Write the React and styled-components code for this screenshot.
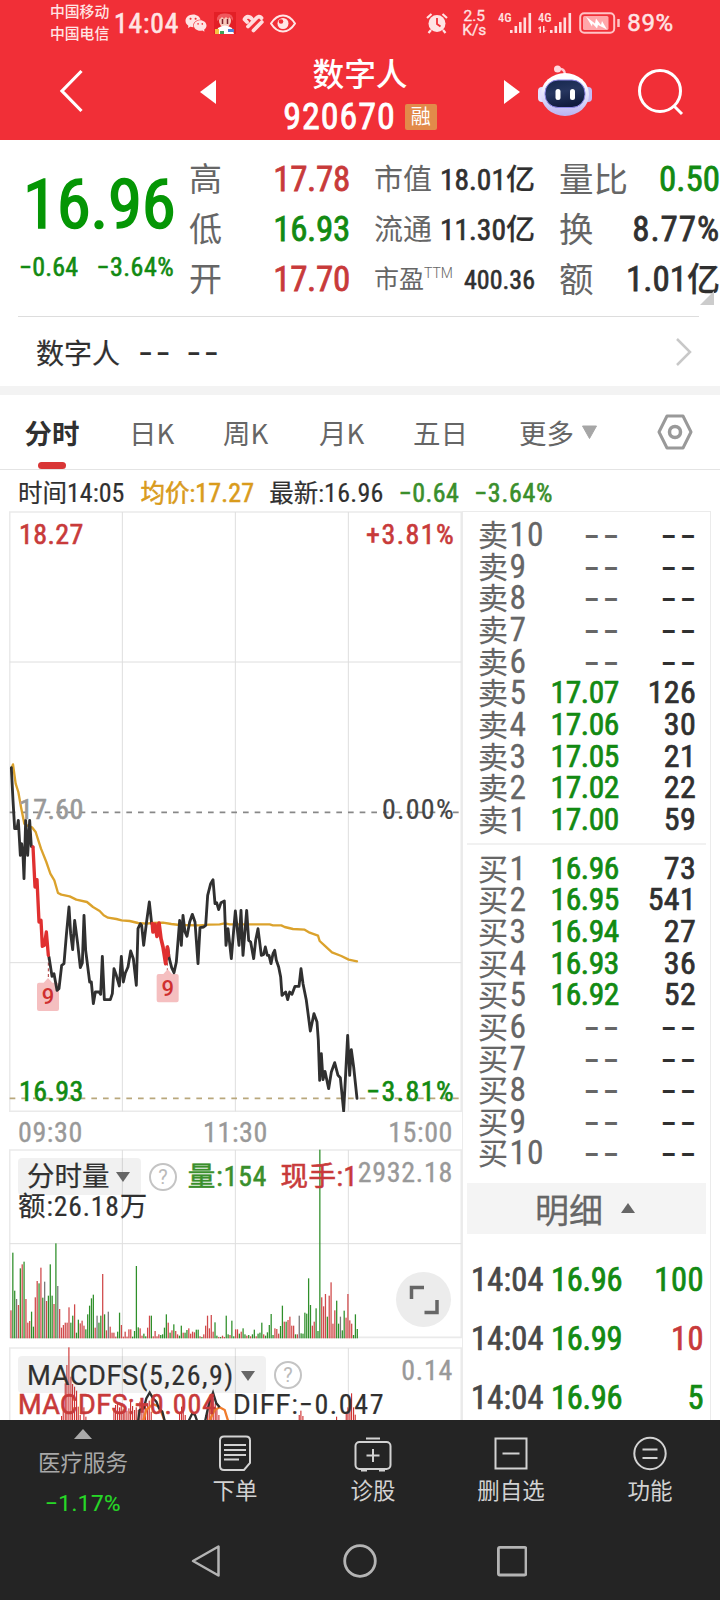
import React from 'react';
import styled, { createGlobalStyle } from 'styled-components';
import { AiFillWechat } from 'react-icons/ai';

const GlobalStyle = createGlobalStyle`
  * {
    box-sizing: border-box;
  }

  body {
    margin: 0;
    background: #fff;
    color: #303030;
    font-family: 'Roboto Condensed', 'Noto Sans CJK SC', sans-serif;
  }

  svg {
    display: block;
    flex: none;
  }
`;

const RED = '#c83a3a';
const GREEN = '#128a12';

const Screen = styled.div`
  width: 720px;
  height: 1600px;
  overflow: hidden;
  display: flex;
  flex-direction: column;
`;

// shared text piece: latin digits and chinese glyphs get their own sizes,
// $thick sits between the regular and the medium cut
const T = styled.span`
  font-size: ${props => props.$size}px;
  font-weight: ${props => props.$weight || 400};
  letter-spacing: ${props => props.$spacing || 0}px;
  color: ${props => props.$color || 'inherit'};
  margin-left: ${props => props.$ml || 0}px;
  font-family: ${props => (props.$wide ? "Roboto, 'Noto Sans CJK SC', sans-serif" : 'inherit')};
  -webkit-text-stroke: ${props => (props.$thick ? '0.022em' : '0.008em')};
  white-space: nowrap;
`;

const Pair = styled.span`
  display: flex;
  align-items: baseline;
`;

/* ---------- header ---------- */

const Header = styled.header`
  height: 140px;
  background: #f12f37;
  color: #fff;
`;

const StatusBar = styled.div`
  height: 46px;
  padding-left: 50px;
  display: flex;
  align-items: center;
  color: #ffe4e4;
`;

const Carriers = styled.div`
  width: 64px;
  font-size: 14.8px;
  line-height: 22px;
  font-weight: 500;
`;

const StatusIcons = styled.div`
  display: flex;
  align-items: center;
  margin-left: 5px;
  gap: 6px;
`;

const StatusRight = styled.div`
  display: flex;
  align-items: center;
  margin-left: 130px;
`;

const Speed = styled.div`
  width: 32px;
  margin-left: 10px;
  font: 400 15.5px/14px Roboto, sans-serif;
  -webkit-text-stroke: 0.02em;
  text-align: center;
`;

const TitleBar = styled.div`
  height: 94px;
  padding-left: 58px;
  display: grid;
  grid-template-columns: 142px 64px 192px 46px 36px 98px 60px;
  align-items: start;
`;

const Title = styled.div`
  text-align: center;
  padding-top: 10px;
`;

const Name = styled.div`
  font-size: 31.7px;
  line-height: 40px;
  font-weight: 500;
`;

const Code = styled.div`
  display: flex;
  align-items: center;
  justify-content: center;
  height: 42px;
`;

const Badge = styled.span`
  width: 32px;
  height: 26px;
  margin-left: 9px;
  border-radius: 2px;
  background: #e28a4a;
  font-size: 20px;
  line-height: 26px;
  text-align: center;
`;

const Slot = styled.div`
  padding-top: ${props => props.$top}px;
  padding-left: ${props => props.$left || 0}px;
`;

/* ---------- quote ---------- */

const Quote = styled.section`
  height: 176px;
  padding: 15px 0 0 18px;
  display: grid;
  grid-template-columns: 171px 161px 24px 161px 24px 161px;
`;

const Price = styled.div`
  display: flex;
  height: 100px;
  line-height: 100px;
  padding-left: 5px;
`;

const Change = styled.div`
  display: flex;
  line-height: 24px;
  padding-left: 1px;
  color: ${GREEN};
`;

const Stat = styled.div`
  height: 50px;
  line-height: 50px;
  display: flex;
  justify-content: space-between;
  white-space: nowrap;
`;

const Label = styled.span`
  font-size: ${props => props.$size}px;
  color: #666;
`;

const Sup = styled.sup`
  font: 300 14px/1 Roboto, sans-serif;
  position: relative;
  top: -1px;
`;

const Corner = styled.div`
  position: absolute;
  left: 700px;
  top: 291px;
  border-left: 14px solid transparent;
  border-bottom: 14px solid #ccc;
`;

const Related = styled.div`
  height: 70px;
  margin: 0 21px 0 18px;
  padding: 0 6px 0 18px;
  border-top: 1px solid #ddd;
  display: flex;
  align-items: center;
`;

const Dashes = styled.span`
  font-family: Inter, sans-serif;
  font-size: ${props => props.$size || 37}px;
  letter-spacing: 2.4px;
  color: ${props => props.$color || '#303030'};
  margin-left: ${props => props.$ml || 0}px;
  margin-right: -3px;
  white-space: nowrap;
`;

const Band = styled.div`
  height: 9px;
  background: #f3f3f3;
`;

/* ---------- tabs ---------- */

const Tabs = styled.nav`
  height: 75px;
  padding-left: 24px;
  border-bottom: 1px solid #e4e4e4;
  display: grid;
  grid-template-columns: 105px 94px 96px 94px 106px 138px 40px;
`;

const Tab = styled.div`
  display: flex;
  align-items: center;
  height: 74px;
  font: 400 27.5px/74px 'Noto Sans CJK SC', sans-serif;
  color: #666;
`;

const ActiveTab = styled.div`
  width: 56px;
  height: 74px;
  padding-top: 8px;
  display: flex;
  flex-direction: column;
  align-items: center;
  font: 700 27.5px/59px 'Noto Sans CJK SC', sans-serif;

  &::after {
    content: '';
    width: 28px;
    height: 7px;
    border-radius: 4px;
    background: #d93636;
  }
`;

const InfoLine = styled.div`
  height: 41px;
  line-height: 46px;
  padding-left: 18px;
  white-space: nowrap;
`;

/* ---------- body ---------- */

const Body = styled.main`
  height: 909px;
  display: grid;
  grid-template-columns: 453px 249px;
  padding-left: 9px;
  overflow: hidden;
`;

const Charts = styled.div`
  display: flex;
  flex-direction: column;
`;

const Panel = styled.div`
  height: ${props => props.$height}px;
  display: grid;
  grid-template-columns: 453px;

  & > * {
    grid-area: 1 / 1;
  }
`;

const Labels = styled.div`
  display: flex;
  flex-direction: column;
  padding: ${props => props.$pad};
`;

const Between = styled.div`
  display: flex;
  justify-content: space-between;
  height: 40px;
  line-height: 40px;
  margin-top: ${props => props.$mt || 0}px;
`;

const Times = styled.div`
  display: grid;
  grid-template-columns: 1fr auto 1fr;
  height: 37px;
  line-height: 41px;
  padding: 0 9px;
  font-size: 28px;
  letter-spacing: 0.6px;
  color: #999;
  -webkit-text-stroke: 0.012em;

  span:last-child {
    text-align: right;
  }
`;

const IndicatorRow = styled.div`
  display: flex;
  align-items: center;
  height: 37px;
  line-height: 37px;
  white-space: nowrap;
`;

const Chip = styled.div`
  display: flex;
  align-items: center;
  justify-content: space-between;
  width: ${props => props.$width}px;
  height: 37px;
  padding: ${props => props.$drop || 0}px 11px 0 9px;
  border-radius: 4px;
  background: rgba(120, 120, 120, 0.1);
`;

const Help = styled.div`
  width: 28px;
  height: 28px;
  margin-left: 8px;
  border: 2px solid #c4c4c4;
  border-radius: 50%;
  font: 400 20px/24px Roboto, sans-serif;
  text-align: center;
  color: #bbb;
`;

const Maximum = styled.span`
  margin-left: auto;
  margin-top: -8px;
  font-size: 28px;
  letter-spacing: 0.7px;
  color: #999;
  -webkit-text-stroke: 0.012em;
`;

const Values = styled.div`
  height: ${props => props.$height}px;
  line-height: ${props => props.$height}px;
  white-space: nowrap;
`;

const Expand = styled.div`
  width: 55px;
  height: 55px;
  margin: 53px 2px 0 auto;
  border-radius: 50%;
  background: #ececec;
  display: flex;
  align-items: center;
  justify-content: center;
`;

/* ---------- order book ---------- */

const Side = styled.aside`
  border: 1px solid #ebebeb;
  border-bottom: 0;
  padding: 7px 4px 0 4px;
`;

const Book = styled.div`
  display: grid;
  grid-template-rows: repeat(10, 31.67px);
`;

const Level = styled.div`
  display: grid;
  grid-template-columns: 70px 71px 1fr;
  padding: 0 10px 0 11px;
  line-height: 31.67px;
  text-align: right;
  white-space: nowrap;

  & > :first-child {
    text-align: left;
    color: #666;
  }
`;

const Rule = styled.div`
  height: 2px;
  margin: 7px 0 8px;
  background: #f1f1f1;
`;

const Detail = styled.div`
  height: 51px;
  margin: 14px 0 17px;
  padding-left: 68px;
  background: #f4f4f4;
  display: flex;
  align-items: center;
  gap: 18px;
  color: #666;
`;

const Trade = styled.div`
  display: grid;
  grid-template-columns: 80px 70px 1fr;
  height: 59px;
  line-height: 59px;
  padding: 0 2px 0 4px;
  font-size: 32.5px;
  -webkit-text-stroke: 0.022em;
  color: ${GREEN};

  & > :first-child {
    letter-spacing: 0.2px;
    color: #484848;
  }

  & > :nth-child(2) {
    letter-spacing: -0.3px;
  }

  & > :last-child {
    text-align: right;
    letter-spacing: 0.5px;
    color: ${props => props.$color};
  }
`;

/* ---------- bottom ---------- */

const Bottom = styled.footer`
  height: 180px;
  background: #242424;
  color: #d2d2d2;
`;

const Actions = styled.div`
  height: 100px;
  padding-left: 14px;
  display: grid;
  grid-template-columns: 152px 138px 138px 138px 140px;
  text-align: center;
  font: 400 22.5px/30px 'Noto Sans CJK SC', sans-serif;
`;

const Action = styled.div`
  display: flex;
  flex-direction: column;
  align-items: center;
  padding-top: 15px;

  svg {
    margin-bottom: 2px;
  }
`;

const Index = styled.div`
  display: flex;
  flex-direction: column;
  align-items: center;
  padding-top: 9px;
  width: 138px;
  color: #a8a8a8;
`;

const NavKeys = styled.div`
  height: 80px;
  padding: 24px 0 0 190px;
  display: grid;
  grid-template-columns: 152px 155px 40px;
`;

/* ---------- data ---------- */

const sells = [[10], [9], [8], [7], [6], [5, '17.07', 126], [4, '17.06', 30], [3, '17.05', 21], [2, '17.02', 22], [1, '17.00', 59]];
const buys = [[1, '16.96', 73], [2, '16.95', 541], [3, '16.94', 27], [4, '16.93', 36], [5, '16.92', 52], [6], [7], [8], [9], [10]];
const trades = [['14:04', '16.96', 100, GREEN], ['14:04', '16.99', 10, RED], ['14:04', '16.96', 5, GREEN]];

const line1 = '35,82 40,180 45,265 52,265 56,240 62,345 66,310 70,345 73,415 78,240 84,345 90,240 95,318 100,320';
const fall1 = '100,320 106,440 112,418 118,545 124,540 128,618 134,615 140,575 146,645';
const line2 = '148,650 157,708 163,700 172,750 178,745 186,675 193,670 200,585 208,500 213,580 219,628 225,540 234,610 242,682 248,668 253,525 258,630 270,725 275,725 281,790 287,755 298,755 303,762 308,648 314,778 332,778 338,760 343,685 350,705 359,737 365,648 371,725 377,698 385,680 393,632 401,655 410,735 415,565 422,550 426,555 432,615 440,550 449,485 456,550';
const fall2 = '458,550 460,575 466,552 472,588 478,548 484,595 490,620 498,670 503,620 506,645';
const line3 = '504,620 509,655 516,682 523,697 530,665 540,540 545,615 550,525 556,575 562,588 570,545 578,522 586,545 595,670 601,562 612,560 618,555 624,465 633,430 640,418 646,490 651,487 657,508 664,487 674,482 679,615 685,565 695,655 702,570 707,512 718,615 724,510 730,645 741,510 747,600 753,605 762,655 768,600 775,565 785,645 792,642 797,620 803,645 808,645 814,670 820,640 825,630 830,660 837,680 843,710 847,765 858,755 864,778 870,755 877,762 886,738 898,738 904,685 910,730 920,780 932,872 943,820 952,845 956,900 960,1020 965,940 970,1018 976,993 987,1045 995,995 1005,967 1015,1005 1022,1012 1032,1112 1038,1000 1044,885 1050,1005 1055,928 1062,980 1072,1074';
const average = '35,85 40,72 48,130 56,155 64,200 74,250 84,256 98,262 108,275 116,300 124,325 140,365 152,400 164,420 175,458 185,463 210,468 230,478 262,485 280,500 300,512 312,525 325,532 350,536 366,540 390,542 415,548 440,550 458,548 490,547 515,551 540,554 600,555 628,553 660,552 675,549 690,552 755,552 810,552 820,555 845,555 855,560 880,566 915,568 930,577 955,586 960,602 975,616 997,636 1025,647 1047,658 1072,663';

// one entry a minute: height followed by r(ise), f(all) or e(qual)
const volumes = (
  '84r 257f 143f 118e 100r 210f 222r 230f 118r 47r 52r 80f 35f 123r 172r 165f 212r 122f 170e 112r 128f 222f 128f 103r 285f 157e 88r 32r 40r 47r ' +
  '47r 93r 47f 68f 102r 17f 56f 45r 53r 38r 27f 72f 98f 120f 131f 32r 68e 47f 68f 193r 72f 24r 80e 35r 17r 17r 5r 20f 77f 40r ' +
  '5r 20r 5r 27r 27r 5f 22f 217f 33f 30r 8r 14f 6f 32r 68r 68f 6r 22r 6r 12r 10f 12f 32f 72f 47r 17f 24r 42f 22r 12r ' +
  '8f 38f 17r 17f 25f 30r 14r 20r 18r 26f 26f 6r 4f 12r 38r 68r 30r 70r 20r 48f 8f 4r 4f 8r 4r 68f 12f 10r 53f 6f ' +
  '27r 27r 14f 20r 30f 12f 8r 10f 6r 12f 26f 6r 14f 17f 47f 12r 8f 18f 40f 73f 10f 30r 28r 14r 37f 98f 50r 50f 55r 65r ' +
  '38r 38r 12f 12r 68e 15f 14f 77f 74f 180f 100f 38r 50r 90f 22f 566f 123r 96r 133r 65f 128r 168r 44r 84r 113f 44f 65e 24f 83f 62r ' +
  '133r 54r 44r 10f 72f 28f'
).split(' ');
const volumeColors = { r: '#d0494a', f: '#2f8f2a', e: '#777' };

const macdBars = [
  [186, 888], [191, 870], [197, 790], [202, 735], [208, 682], [214, 770], [219, 792], [225, 800], [231, 812], [236, 860], [242, 885], [253, 862], [259, 890],
  [343, 872], [348, 855], [354, 850], [360, 862], [365, 850], [371, 868], [376, 860], [382, 872], [388, 865], [393, 842], [399, 858], [405, 870], [410, 862],
  [416, 870], [421, 845], [427, 835], [433, 852], [438, 838], [444, 850], [449, 842], [455, 875], [540, 880], [546, 860], [551, 858], [557, 885],
  [618, 885], [624, 862], [629, 842], [635, 830], [641, 835], [647, 850], [652, 868], [658, 885], [899, 885], [904, 872], [910, 888],
  [1011, 890], [1040, 880], [1045, 862], [1051, 838], [1056, 820], [1062, 862], [1067, 884]
];

function Verticals({ top, bottom }) {
  return [368, 707, 1046].map(x => <path key={x} d={`M${x} ${top}V${bottom}`} stroke="#dedede" strokeWidth="3" />);
}

function Marker({ x, y }) {
  return (
    <g>
      <path d={`M${x} ${y}l13 14h14q6 0 6 6v73q0 6-6 6h-54q-6 0-6-6v-73q0-6 6-6h14z`} fill="#f4bcbd" fillOpacity="0.95" />
      <text x={x} y={y + 79} textAnchor="middle" fontFamily="Roboto, sans-serif" fontWeight="500" fontSize="66" fill="#cf2f2f">9</text>
    </g>
  );
}

function PriceChart() {
  return (
    <svg width="453" height="601" viewBox="28 -688 1359 1803" fill="none">
      <path d="M30 -685H1385V1113H30z" stroke="#eaeaea" strokeWidth="5" />
      <Verticals top={-685} bottom={1113} />
      <path d="M30 -235H1385M30 667H1385" stroke="#dedede" strokeWidth="3" />
      <path d="M30 216H1385" stroke="#888" strokeWidth="5" strokeDasharray="17 18" />
      <path d="M30 1074H1385" stroke="#b9a77c" strokeWidth="5" strokeDasharray="17 18" />
      <path d="M146 650V712M503 650V690" stroke="#a33" strokeWidth="3" strokeDasharray="9 8" />
      <Marker x={145} y={713} />
      <Marker x={504} y={687} />
      <g strokeWidth="8.500" strokeLinejoin="round" strokeLinecap="round">
        <polyline points={average} stroke="#dba22c" strokeWidth="7" />
        <polyline points={line1} stroke="#303030" />
        <polyline points={line2} stroke="#303030" />
        <polyline points={line3} stroke="#303030" />
        <polyline points={fall1} stroke="#e03030" strokeWidth="10" />
        <polyline points={fall2} stroke="#e03030" strokeWidth="11" />
      </g>
    </svg>
  );
}

function VolumeChart() {
  return (
    <svg width="453" height="190" viewBox="28 86 1359 570" fill="none">
      <path d="M30 89H1385V651H30z" stroke="#eaeaea" strokeWidth="5" />
      <Verticals top={89} bottom={651} />
      <path d="M30 370H1385" stroke="#dedede" strokeWidth="3" />
      {volumes.map((item, i) => {
        const height = parseInt(item, 10);
        return <rect key={i} x={32 + i * 5.616} y={654 - height} width="3.8" height={height} fill={volumeColors[item.slice(-1)]} />;
      })}
    </svg>
  );
}

function MacdChart() {
  return (
    <svg width="453" height="74" viewBox="28 681 1359 222" fill="none">
      <path d="M30 920V684H1385V920" stroke="#eaeaea" strokeWidth="5" />
      <Verticals top={684} bottom={920} />
      {macdBars.map(([x, y]) => <rect key={x} x={x - 2} y={y} width="3.4" height={910 - y} fill="#cf3434" />)}
      <polyline points="430,905 440,870 460,852 478,860 490,890 497,910" stroke="#f07c2c" strokeWidth="7" />
      <polyline points="628,905 645,870 660,862 675,870 686,905" stroke="#f07c2c" strokeWidth="7" />
      <polyline points="415,905 420,870 432,865 440,835 450,818 460,835 470,845 478,865 488,875 497,910" stroke="#303030" strokeWidth="7" />
      <polyline points="566,905 578,880 586,885 593,905" stroke="#303030" strokeWidth="7" />
      <polyline points="616,905 628,850 640,818 650,850 660,862" stroke="#303030" strokeWidth="7" />
    </svg>
  );
}

function Signal({ transfer }) {
  return (
    <svg width="34" height="24" viewBox="0 -2 34 24" fill="#ffdede">
      <text x="0" y="9" fontSize="12.500" fontWeight="600" fontFamily="'Roboto Condensed', sans-serif">4G</text>
      {transfer && <path d="M0 15l3-2v7H1.500v-4.500H0zM5 13h1.500v4.500H9l-4 2.500z" />}
      <path d="M12 17h2.600v3H12zM16.500 13h2.600v7h-2.600zM21 9h2.600v11H21zM25.500 4.500h2.600V20h-2.600zM30.500 0h2.600v20h-2.600z" />
    </svg>
  );
}

function Robot() {
  return (
    <svg width="54" height="52" viewBox="0 0 54 52">
      <defs>
        <linearGradient id="shell" x1="0" y1="0" x2="0" y2="1">
          <stop offset="0.2" stopColor="#fff" />
          <stop offset="1" stopColor="#b9b3f2" />
        </linearGradient>
        <linearGradient id="face" x1="0" y1="0" x2="0.3" y2="1">
          <stop offset="0" stopColor="#14264d" />
          <stop offset="0.5" stopColor="#27365f" />
          <stop offset="1" stopColor="#111c3f" />
        </linearGradient>
      </defs>
      <path d="M20 4q7-1 7 6" fill="none" stroke="#ffc9d2" strokeWidth="2.500" />
      <circle cx="19.500" cy="4" r="3.500" fill="#ffd9df" />
      <rect x="0" y="22" width="8" height="15" rx="4" fill="#e4e0ff" />
      <rect x="46" y="22" width="8" height="15" rx="4" fill="#c4bcf5" />
      <ellipse cx="27" cy="29.500" rx="24" ry="21.500" fill="url(#shell)" />
      <rect x="7" y="15" width="40" height="27.500" rx="13" fill="url(#face)" stroke="#8f88e8" strokeWidth="1" />
      <rect x="17.500" y="24" width="5" height="11" rx="2.500" fill="#fff" />
      <rect x="32" y="24" width="5" height="11" rx="2.500" fill="#fff" />
    </svg>
  );
}

function StatusLine() {
  return (
    <StatusBar>
      <Carriers>中国移动<br />中国电信</Carriers>
      <T $size={27.5} $spacing={0.9} $thick>14:04</T>
      <StatusIcons>
        <AiFillWechat size={24} />
        <svg width="22" height="22" viewBox="0 0 22 22">
          <rect width="22" height="22" fill="#e31f26" />
          <ellipse cx="11" cy="9" rx="6" ry="6.500" fill="#f7c9bb" />
          <path d="M3 9Q2 1 11 1.500q9-.500 8 7.500l-3-4-2 2-2-2-2 2-2-2-2 2z" fill="#f0565c" />
          <path d="M8.500 7v5M13.500 7v5" stroke="#7d1f28" strokeWidth="1.500" />
          <path d="M4 16q7-5 14 0l2 6H2z" fill="#fff" />
          <path d="M1 17h4v5H1z" fill="#f5c242" />
          <path d="M14 17h6v3h-6z" fill="#4c83d8" />
          <path d="M6 19h4v3H6z" fill="#3fa35a" />
        </svg>
        <svg width="22" height="19" viewBox="0 0 22 19" fill="none" stroke="#ffdede" strokeWidth="3.800" strokeLinecap="round">
          <path d="M2.600 5.500L5 8M2.600 5.200Q4.500 1.500 8 3.200L9.500 4.500M6 12.500L13.500 5Q17 .800 19.500 4M11.500 16.500L19.800 8" />
        </svg>
        <svg width="26" height="19" viewBox="0 0 26 19" fill="none" stroke="#ffe6e6" strokeWidth="2">
          <path d="M1 9.500Q6 1.500 13 1.500T25 9.500Q20 17.500 13 17.500T1 9.500z" />
          <circle cx="13" cy="9.500" r="5.500" fill="#ffe6e6" stroke="none" />
          <circle cx="11" cy="7.500" r="2.300" fill="#f12f37" stroke="none" />
        </svg>
      </StatusIcons>
      <StatusRight>
        <svg width="22" height="22" viewBox="0 0 22 22">
          <circle cx="11" cy="11.500" r="8.500" fill="#ffe4e4" />
          <path d="M1 6l4.500-4M21 6l-4.500-4M5 18l-2.500 3M17 18l2.500 3" stroke="#ffe4e4" strokeWidth="2.200" />
          <path d="M11 6v6l3.500 2.500" fill="none" stroke="#f12f37" strokeWidth="1.800" />
        </svg>
        <Speed>2.5<br />K/s</Speed>
        <Slot $left={8}><Signal /></Slot>
        <Slot $left={6}><Signal transfer /></Slot>
        <Slot $left={7}>
          <svg width="42" height="22" viewBox="0 0 42 22" fill="none">
            <rect x="1.200" y="1.200" width="34" height="19.600" rx="4" stroke="#ffc4c6" strokeWidth="2" />
            <rect x="4" y="4" width="25.500" height="14" rx="1.500" fill="#ffa7aa" />
            <path d="M7 4.500l9 7 1-5 5 6.500 1-4 5 8.500-9-4.500-1 3.500-4.500-5-.500 3z" fill="#fff" />
            <path d="M39.500 7v8" stroke="#ffc4c6" strokeWidth="2.500" />
          </svg>
        </Slot>
        <T $size={24} $ml={6} $spacing={0.7} $wide $thick>89%</T>
      </StatusRight>
    </StatusBar>
  );
}

function Top() {
  return (
    <Header>
      <StatusLine />
      <TitleBar>
        <Slot $top={23}>
          <svg width="26" height="44" viewBox="0 0 26 44" fill="none" stroke="#fff" strokeWidth="3.200">
            <path d="M23.500 2L4 22l19.500 20" />
          </svg>
        </Slot>
        <Slot $top={34}>
          <svg width="17" height="24" viewBox="0 0 17 24" fill="#fff"><path d="M16 0v24L0 12z" /></svg>
        </Slot>
        <Title>
          <Name>数字人</Name>
          <Code>
            <T $size={36} $spacing={1} $thick>920670</T>
            <Badge>融</Badge>
          </Code>
        </Title>
        <Slot $top={34} $left={48}>
          <svg width="17" height="24" viewBox="0 0 17 24" fill="#fff"><path d="M0 0v24l16-12z" /></svg>
        </Slot>
        <Slot $top={19} $left={36}><Robot /></Slot>
        <Slot $top={23} $left={98}>
          <svg width="48" height="48" viewBox="0 0 48 48" fill="none" stroke="#fff" strokeWidth="3">
            <circle cx="24" cy="22" r="20.500" />
            <path d="M38 37l8 8" />
          </svg>
        </Slot>
      </TitleBar>
    </Header>
  );
}

function QuoteSection() {
  return (
    <Quote>
      <div>
        <Price><T $size={69} $spacing={-0.4} $color="#059605" $thick>16.96</T></Price>
        <Change>
          <T $size={26} $spacing={0.2} $thick>−0.64</T>
          <T $size={26} $spacing={0.5} $ml={18} $thick>−3.64%</T>
        </Change>
      </div>
      <div>
        <Stat><Label $size={33}>高</Label><T $size={35} $spacing={-0.3} $color={RED} $thick>17.78</T></Stat>
        <Stat><Label $size={33}>低</Label><T $size={35} $spacing={-0.3} $color={GREEN} $thick>16.93</T></Stat>
        <Stat><Label $size={33}>开</Label><T $size={35} $spacing={-0.3} $color={RED} $thick>17.70</T></Stat>
      </div>
      <div />
      <div>
        <Stat><Label $size={29}>市值</Label><Pair><T $size={29.5} $thick>18.01</T><T $size={29} $weight={500}>亿</T></Pair></Stat>
        <Stat><Label $size={29}>流通</Label><Pair><T $size={29.5} $thick>11.30</T><T $size={29} $weight={500}>亿</T></Pair></Stat>
        <Stat><Label $size={25}>市盈<Sup>TTM</Sup></Label><T $size={26} $thick>400.36</T></Stat>
      </div>
      <div />
      <div>
        <Stat><Label $size={34.5}>量比</Label><T $size={35} $color={GREEN} $thick>0.50</T></Stat>
        <Stat><Label $size={34.5}>换</Label><T $size={35} $spacing={0.9} $thick>8.77%</T></Stat>
        <Stat><Label $size={34.5}>额</Label><Pair><T $size={35} $thick>1.01</T><T $size={33} $weight={500}>亿</T></Pair></Stat>
      </div>
      <Corner />
    </Quote>
  );
}

function TabBar() {
  return (
    <Tabs>
      <ActiveTab>分时</ActiveTab>
      <Tab>日K</Tab>
      <Tab>周K</Tab>
      <Tab>月K</Tab>
      <Tab>五日</Tab>
      <Tab>
        更多
        <Slot $left={7}>
          <svg width="17" height="15" viewBox="0 0 17 15"><path d="M1.500 1h14L8.500 13.500z" fill="#a6a6a6" stroke="#a6a6a6" strokeLinejoin="round" /></svg>
        </Slot>
      </Tab>
      <Tab>
        <svg width="36" height="36" viewBox="0 0 36 36" fill="none" stroke="#999" strokeWidth="3" strokeLinejoin="round">
          <path d="M10 2h16l8 16-8 16H10L2 18z" />
          <circle cx="18" cy="18" r="5.500" strokeWidth="3.500" />
        </svg>
      </Tab>
    </Tabs>
  );
}

function DownArrow() {
  return <svg width="14" height="10" viewBox="0 0 14 10"><path d="M0 0h14L7 10z" fill="#666" /></svg>;
}

function LevelRow({ side, level }) {
  const [rank, price, amount] = level;

  return (
    <Level>
      <span><T $size={30}>{side}</T><T $size={33.5} $ml={1.5} $spacing={1}>{rank}</T></span>
      {price ? <T $size={31.5} $spacing={-0.4} $color={GREEN} $thick>{price}</T> : <Dashes $color="#666">--</Dashes>}
      {amount ? <T $size={32} $spacing={0.3} $thick>{amount}</T> : <Dashes>--</Dashes>}
    </Level>
  );
}

function OrderBook() {
  return (
    <Side>
      <Book>{sells.map(level => <LevelRow key={level[0]} side="卖" level={level} />)}</Book>
      <Rule />
      <Book>{buys.map(level => <LevelRow key={level[0]} side="买" level={level} />)}</Book>
      <Detail>
        <T $size={34}>明细</T>
        <svg width="14" height="12" viewBox="0 0 14 12"><path d="M0 10h14L7 0z" fill="#666" /></svg>
      </Detail>
      {trades.map(([time, price, amount, color], i) => (
        <Trade key={i} $color={color}>
          <span>{time}</span>
          <span>{price}</span>
          <span>{amount}</span>
        </Trade>
      ))}
    </Side>
  );
}

function ChartColumn() {
  return (
    <Charts>
      <Panel $height={601}>
        <PriceChart />
        <Labels $pad="4px 7px 0 10px">
          <Between>
            <T $size={28} $spacing={0.4} $color={RED} $thick>18.27</T>
            <T $size={28} $spacing={1.4} $color={RED} $thick>+3.81%</T>
          </Between>
          <Between $mt={235}>
            <T $size={28} $spacing={0.4} $color="#999" $thick>17.60</T>
            <T $size={28} $spacing={1.3} $color="#444">0.00%</T>
          </Between>
          <Between $mt={242}>
            <T $size={28} $spacing={0.4} $color={GREEN} $thick>16.93</T>
            <T $size={28} $spacing={1.4} $color={GREEN} $thick>−3.81%</T>
          </Between>
        </Labels>
      </Panel>
      <Times><span>09:30</span><span>11:30</span><span>15:00</span></Times>
      <Panel $height={190}>
        <VolumeChart />
        <Labels $pad="9px 9px 0 9px">
          <IndicatorRow>
            <Chip $width={125}><T $size={27.5}>分时量</T><DownArrow /></Chip>
            <Help>?</Help>
            <T $size={27.5} $ml={11} $spacing={1} $color="#3a8f2c" $thick>量:154</T>
            <T $size={27.5} $ml={13} $spacing={0.6} $color={RED} $thick>现手:1</T>
            <Maximum>2932.18</Maximum>
          </IndicatorRow>
          <Values $height={24}><T $size={27.5} $spacing={0.9}>额:26.18万</T></Values>
          <Expand>
            <svg width="30" height="30" viewBox="0 0 30 30" fill="none" stroke="#666" strokeWidth="3.500">
              <path d="M2.500 14V2.500H15M28 15v12.500H15.500" />
            </svg>
          </Expand>
        </Labels>
      </Panel>
      <Slot $top={8} />
      <Panel $height={74}>
        <MacdChart />
        <Labels $pad="9px 9px 0 9px">
          <IndicatorRow>
            <Chip $width={248} $drop={3}>
              <Pair><T $size={27.3} $spacing={0.5} $wide>MACDFS</T><T $size={28} $spacing={1.5}>(5,26,9)</T></Pair>
              <DownArrow />
            </Chip>
            <Help>?</Help>
            <Maximum>0.14</Maximum>
          </IndicatorRow>
          <Values $height={24}>
            <T $size={27} $spacing={0.4} $color={RED} $wide $thick>MACDFS:</T>
            <T $size={28} $spacing={0.9} $color={RED} $thick>+0.004</T>
            <T $size={27} $ml={16} $spacing={0.9} $wide>DIFF:</T>
            <T $size={28} $spacing={1.6}>−0.047</T>
          </Values>
        </Labels>
      </Panel>
    </Charts>
  );
}

function BottomBar() {
  return (
    <Bottom>
      <Actions>
        <Index>
          <svg width="18" height="10" viewBox="0 0 18 10"><path d="M0 10h18L9 0z" fill="#aaa" /></svg>
          <Slot $top={7}>医疗服务</Slot>
          <Slot $top={10}><T $size={22.5} $spacing={0.5} $color="#27d827" $wide>−1.17%</T></Slot>
        </Index>
        <Action>
          <svg width="34" height="37" viewBox="0 0 34 37" fill="none" stroke="#d2d2d2" strokeWidth="2">
            <path d="M6 1.500h22q4 0 4 4V28l-6 7H6q-4 0-4-4V5.500q0-4 4-4z" />
            <path d="M6 10h22M6 15h22M6 20h22M6 24.500h15" />
          </svg>
          下单
        </Action>
        <Action>
          <svg width="38" height="37" viewBox="0 0 38 37" fill="none" stroke="#d2d2d2" strokeWidth="2">
            <rect x="1.500" y="7" width="35" height="27" rx="4" />
            <path d="M12 3.500h14M19 14v13M12.500 20.500h13" />
            <path d="M7 35.500h6M25 35.500h6" />
          </svg>
          诊股
        </Action>
        <Action>
          <svg width="34" height="37" viewBox="0 0 34 37" fill="none" stroke="#d2d2d2" strokeWidth="2">
            <path d="M1.500 3.500h31V33.500H1.500zM8.500 18.500h17" />
          </svg>
          删自选
        </Action>
        <Action>
          <svg width="34" height="37" viewBox="0 0 34 37" fill="none" stroke="#d2d2d2" strokeWidth="2">
            <circle cx="17" cy="18.500" r="15.700" />
            <path d="M9.500 14.500h15M9.500 23h15" />
          </svg>
          功能
        </Action>
      </Actions>
      <NavKeys>
        <svg width="32" height="34" viewBox="0 0 32 34" fill="none" stroke="#b4b4b4" strokeWidth="2.500" strokeLinejoin="round">
          <path d="M28.500 2.500v29L3 17z" />
        </svg>
        <svg width="36" height="36" viewBox="0 0 36 36" fill="none" stroke="#b4b4b4" strokeWidth="2.800"><circle cx="18" cy="17" r="15.300" /></svg>
        <svg width="30" height="34" viewBox="0 0 30 34" fill="none" stroke="#b4b4b4" strokeWidth="2.800"><rect x="1.400" y="3.400" width="27.600" height="27.600" rx="1.500" /></svg>
      </NavKeys>
    </Bottom>
  );
}

export default function App() {
  return (
    <Screen>
      <GlobalStyle />
      <Top />
      <QuoteSection />
      <Related>
        <T $size={28}>数字人</T>
        <Dashes $size={33} $ml={18}>--</Dashes>
        <Dashes $size={33} $ml={16}>--</Dashes>
        <Slot $left={458}>
          <svg width="16" height="28" viewBox="0 0 16 28" fill="none" stroke="#c8c8c8" strokeWidth="2.500"><path d="M1 1l13 13L1 27" /></svg>
        </Slot>
      </Related>
      <Band />
      <TabBar />
      <InfoLine>
        <T $size={24.5}>时间</T><T $size={26}>14:05</T>
        <T $size={24.5} $ml={16} $color="#d99b1c" $thick>均价:</T><T $size={26} $spacing={0.2} $color="#d99b1c" $thick>17.27</T>
        <T $size={24.5} $ml={15}>最新:</T><T $size={26} $spacing={0.3}>16.96</T>
        <T $size={26} $ml={15} $spacing={0.4} $color="#3a8f2c" $thick>−0.64</T>
        <T $size={26} $ml={15} $spacing={0.7} $color="#3a8f2c" $thick>−3.64%</T>
      </InfoLine>
      <Body>
        <ChartColumn />
        <OrderBook />
      </Body>
      <BottomBar />
    </Screen>
  );
}
